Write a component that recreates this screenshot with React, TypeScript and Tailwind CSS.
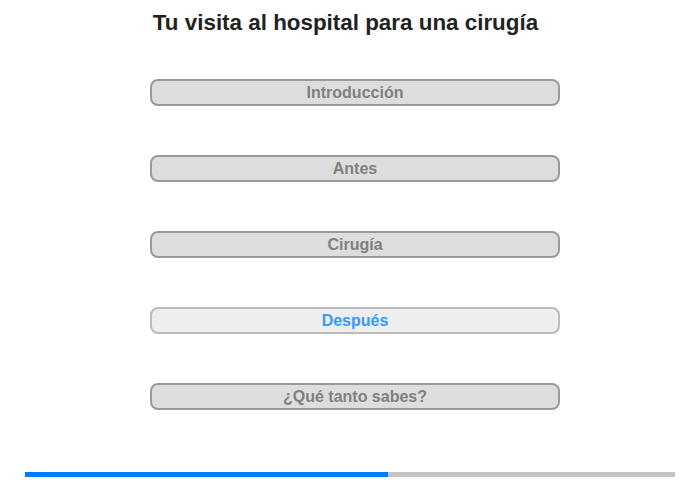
import React from "react";

const items = ["Introducción", "Antes", "Cirugía", "Después", "¿Qué tanto sabes?"];

export default function App() {
  return (
    <div
      className="w-[700px] h-[480px] bg-white relative overflow-hidden"
      style={{ fontFamily: '"Liberation Sans", Arial, sans-serif' }}
    >
      <div className="pt-[10px] h-[79px] flex justify-center pr-[9px]">
        <h1 className="text-[22.4px] leading-[26px] font-bold text-[#222222]">
          Tu visita al hospital para una cirugía
        </h1>
      </div>
      <div className="flex flex-col gap-[49px] pl-[150px]">
        {items.map((t) => {
          const active = t === "Después";
          return (
            <div
              key={t}
              className={
                active
                  ? "w-[410px] h-[27px] rounded-[8px] border-2 border-[#bbbbbb] bg-[#eeeeee] text-[#3399ff] text-[16px] font-bold flex items-center justify-center leading-none"
                  : "w-[410px] h-[27px] rounded-[8px] border-2 border-[#999999] bg-[#dddddd] text-[#808080] text-[16px] font-bold flex items-center justify-center leading-none"
              }
            >
              {t}
            </div>
          );
        })}
      </div>
      <div className="absolute left-[25px] top-[472px] w-[650px] h-[5px] bg-[#c4c4c4]">
        <div className="h-full w-[363px] bg-[#007bff]" />
      </div>
    </div>
  );
}
